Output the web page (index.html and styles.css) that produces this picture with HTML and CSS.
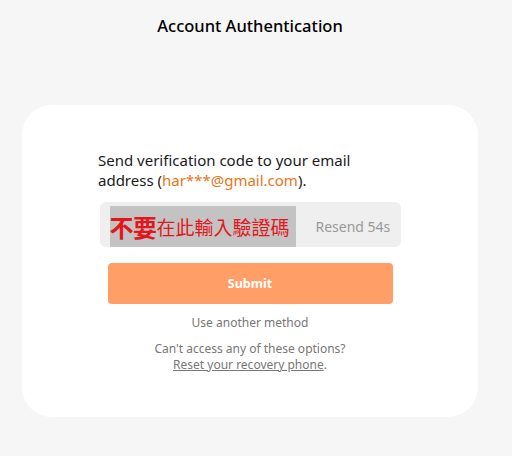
FILE: index.html
```html
<!DOCTYPE html>
<html>
<head>
<meta charset="utf-8">
<link rel="stylesheet" href="styles.css">
</head>
<body>
<div class="page">
  <h1 class="title">Account Authentication</h1>
  <div class="card">
    <p class="desc">Send verification code to your email address (<span class="email">har***@gmail.com</span>).</p>
    <div class="field">
      <div class="overlay"><span class="big">不要</span><span class="small">在此輸入驗證碼</span></div>
      <span class="resend">Resend 54s</span>
    </div>
    <button class="submit">Submit</button>
    <div class="other">Use another method</div>
    <div class="help">Can't access any of these options?<br><a class="reset">Reset your recovery phone</a>.</div>
  </div>
</div>
</body>
</html>
```

FILE: styles.css
```css
html, body {
  margin: 0;
  padding: 0;
  background: #f6f6f6;
}
body {
  font-family: "Noto Sans", "Liberation Sans", sans-serif;
  color: #111;
}
.page {
  width: 500px;
  display: flex;
  flex-direction: column;
  align-items: center;
}
.title {
  margin: 13px 0 0;
  font-size: 16.5px;
  font-weight: 500;
  line-height: 26px;
  color: #000;
}
.card {
  margin-top: 66px;
  width: 456px;
  height: 312px;
  box-sizing: border-box;
  background: #fff;
  border-radius: 30px;
  padding: 45px 76px 0;
  display: flex;
  flex-direction: column;
  align-items: center;
}
.desc {
  margin: 0;
  align-self: stretch;
  font-size: 15px;
  line-height: 20px;
  color: #1a1a1a;
}
.email {
  color: #e8751a;
}
.field {
  margin-top: 12px;
  width: 301px;
  height: 45px;
  box-sizing: border-box;
  background: #efefef;
  border-radius: 6px;
  display: flex;
  align-items: center;
  padding: 3px 0 0 10px;
  align-self: center;
}
.overlay {
  width: 186px;
  height: 41px;
  background: #c3c3c3;
  display: flex;
  align-items: center;
  color: #e3161c;
  font-family: "Noto Sans CJK TC", sans-serif;
  white-space: nowrap;
  overflow: hidden;
}
.big {
  font-size: 24px;
  font-weight: 700;
  letter-spacing: -0.5px;
}
.small {
  font-size: 19px;
}
.resend {
  margin-left: 20px;
  font-size: 14px;
  color: #999;
}
.submit {
  margin-top: 16px;
  width: 285px;
  height: 41px;
  border: none;
  border-radius: 4px;
  background: #ff9e66;
  color: #fff;
  font-family: "Noto Sans", sans-serif;
  font-weight: 700;
  font-size: 12.5px;
}
.other {
  margin-top: 11px;
  font-size: 12px;
  line-height: 16px;
  color: #777;
}
.help {
  margin-top: 10px;
  font-size: 12px;
  line-height: 16px;
  color: #777;
  text-align: center;
}
.reset {
  text-decoration: underline;
}
```
